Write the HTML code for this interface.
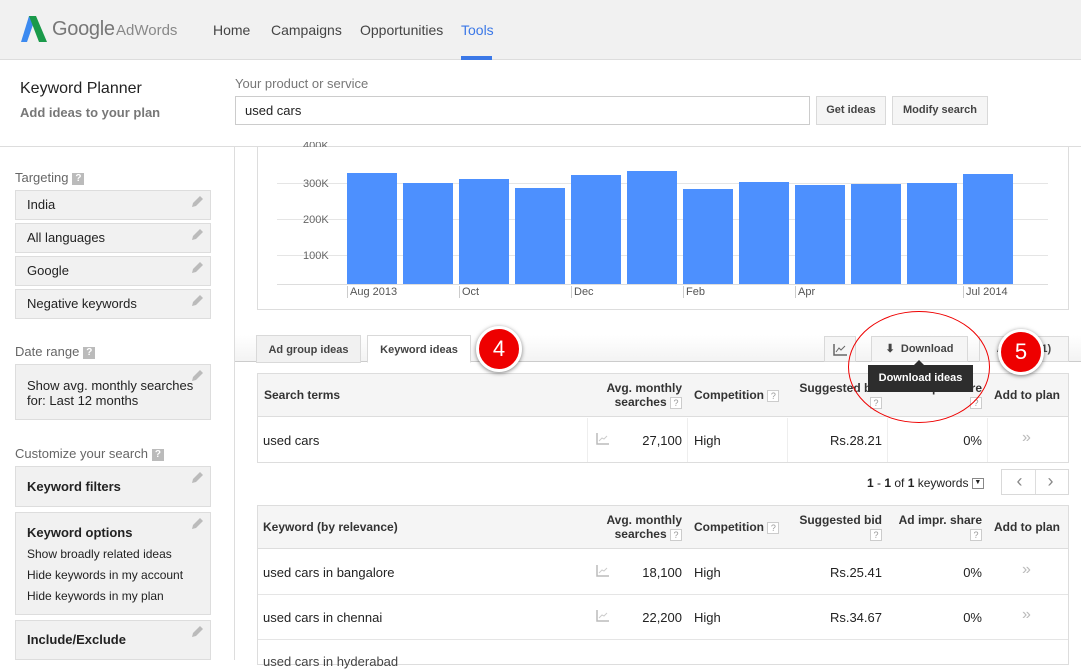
<!DOCTYPE html>
<html><head><meta charset="utf-8"><style>
*{box-sizing:border-box;margin:0;padding:0}
body{width:1081px;height:660px;overflow:hidden;font-family:"Liberation Sans",Arial,sans-serif;font-size:13px;color:#222;background:#fff;position:relative}
.a{position:absolute}
.box{position:absolute;left:15px;width:196px;background:#f1f1f1;border:1px solid #ddd;padding:0 11px;line-height:28px;font-size:13px}
.pen{position:absolute;right:7px;top:4px;width:12px;height:14px}
.q{display:inline-block;width:12px;height:12px;background:#bbb;color:#fff;font-size:10px;line-height:12px;text-align:center;font-weight:bold;vertical-align:middle;margin-left:4px}
.qq{display:inline-block;width:12px;height:12px;border:1px solid #ccc;color:#999;font-size:9px;line-height:10px;text-align:center;font-weight:normal;vertical-align:middle;background:#fff}
.bar{position:absolute;background:#4d90fe;width:50px;bottom:376px}
.btn{position:absolute;background:#f5f5f5;border:1px solid #d9d9d9;font-weight:bold;font-size:11px;color:#444;text-align:center}
.th{font-weight:bold;font-size:12px;color:#333}
.lbl{color:#666;font-size:13px}
</style></head><body>
<div class="a" style="left:0;top:0;width:1081px;height:60px;background:#f1f1f1;border-bottom:1px solid #ddd"></div>
<svg class="a" style="left:21px;top:16px" width="26" height="26" viewBox="0 0 26 26"><polygon points="8,0 15,0 6,26 0,26" fill="#3c8af0"/><polygon points="8,0 15,0 26,26 18,26" fill="#1a9a4a"/></svg>
<div class="a" style="left:52px;top:18px;font-size:20px;color:#777;letter-spacing:-0.3px">Google</div>
<div class="a" style="left:116px;top:22px;font-size:15px;color:#888">AdWords</div>
<div class="a" style="left:213px;top:22px;font-size:14px;color:#444">Home</div>
<div class="a" style="left:271px;top:22px;font-size:14px;color:#444">Campaigns</div>
<div class="a" style="left:360px;top:22px;font-size:14px;color:#444">Opportunities</div>
<div class="a" style="left:461px;top:22px;font-size:14px;color:#3b78e7">Tools</div>
<div class="a" style="left:461px;top:56px;width:31px;height:4px;background:#3b78e7"></div>
<div class="a" style="left:20px;top:80px;font-size:16px;color:#222">Keyword Planner</div>
<div class="a" style="left:20px;top:105px;font-size:13px;font-weight:bold;color:#777">Add ideas to your plan</div>
<div class="a" style="left:235px;top:76px;font-size:13px;color:#777">Your product or service</div>
<div class="a" style="left:235px;top:96px;width:575px;height:29px;border:1px solid #ccc;padding:6px 9px;font-size:13px">used cars</div>
<div class="btn" style="left:816px;top:96px;width:70px;height:29px;line-height:27px">Get ideas</div>
<div class="btn" style="left:892px;top:96px;width:96px;height:29px;line-height:27px">Modify search</div>
<div class="a" style="left:0;top:146px;width:1081px;height:1px;background:#ddd"></div>
<div class="a" style="left:234px;top:147px;width:1px;height:513px;background:#ddd"></div>
<div class="a lbl" style="left:15px;top:170px">Targeting<span class="q">?</span></div>
<div class="box" style="top:190px">India<svg class="pen" viewBox="0 0 12 14"><path d="M9 1l3 3-7 7-4 1 1-4z" fill="#bbb"/></svg></div>
<div class="box" style="top:223px">All languages<svg class="pen" viewBox="0 0 12 14"><path d="M9 1l3 3-7 7-4 1 1-4z" fill="#bbb"/></svg></div>
<div class="box" style="top:256px">Google<svg class="pen" viewBox="0 0 12 14"><path d="M9 1l3 3-7 7-4 1 1-4z" fill="#bbb"/></svg></div>
<div class="box" style="top:289px">Negative keywords<svg class="pen" viewBox="0 0 12 14"><path d="M9 1l3 3-7 7-4 1 1-4z" fill="#bbb"/></svg></div>
<div class="a lbl" style="left:15px;top:344px">Date range<span class="q">?</span></div>
<div class="box" style="top:364px;height:56px;line-height:15px;padding-top:13px">Show avg. monthly searches<br>for: Last 12 months<svg class="pen" viewBox="0 0 12 14"><path d="M9 1l3 3-7 7-4 1 1-4z" fill="#bbb"/></svg></div>
<div class="a lbl" style="left:15px;top:446px">Customize your search<span class="q">?</span></div>
<div class="box" style="top:466px;height:41px;line-height:39px;font-weight:bold">Keyword filters<svg class="pen" viewBox="0 0 12 14"><path d="M9 1l3 3-7 7-4 1 1-4z" fill="#bbb"/></svg></div>
<div class="box" style="top:512px;height:103px;line-height:21px;padding-top:9px;font-size:12px"><b style="font-size:13px">Keyword options</b><br>Show broadly related ideas<br>Hide keywords in my account<br>Hide keywords in my plan<svg class="pen" viewBox="0 0 12 14"><path d="M9 1l3 3-7 7-4 1 1-4z" fill="#bbb"/></svg></div>
<div class="box" style="top:620px;height:40px;line-height:38px;font-weight:bold">Include/Exclude<svg class="pen" viewBox="0 0 12 14"><path d="M9 1l3 3-7 7-4 1 1-4z" fill="#bbb"/></svg></div>
<div class="a" style="left:257px;top:147px;width:812px;height:163px;border:1px solid #ddd;border-top:none"></div>
<div class="a" style="left:277px;top:183px;width:771px;height:1px;background:#e5e5e5"></div>
<div class="a" style="left:277px;top:219px;width:771px;height:1px;background:#e5e5e5"></div>
<div class="a" style="left:277px;top:255px;width:771px;height:1px;background:#e5e5e5"></div>
<div class="a" style="left:277px;top:284px;width:771px;height:1px;background:#ddd"></div>
<div class="a" style="left:303px;top:142px;font-size:11px;color:#666;height:5px;overflow:hidden;line-height:8px">400K</div>
<div class="a" style="left:303px;top:178px;font-size:11px;color:#666">300K</div>
<div class="a" style="left:303px;top:214px;font-size:11px;color:#666">200K</div>
<div class="a" style="left:303px;top:250px;font-size:11px;color:#666">100K</div>
<div class="bar" style="left:347px;top:173px"></div><div class="bar" style="left:403px;top:183px"></div><div class="bar" style="left:459px;top:179px"></div><div class="bar" style="left:515px;top:188px"></div><div class="bar" style="left:571px;top:175px"></div><div class="bar" style="left:627px;top:171px"></div><div class="bar" style="left:683px;top:189px"></div><div class="bar" style="left:739px;top:182px"></div><div class="bar" style="left:795px;top:185px"></div><div class="bar" style="left:851px;top:184px"></div><div class="bar" style="left:907px;top:183px"></div><div class="bar" style="left:963px;top:174px"></div>
<div class="a" style="left:347px;top:286px;font-size:11px;color:#555;border-left:1px solid #ccc;padding-left:2px">Aug 2013</div>
<div class="a" style="left:459px;top:286px;font-size:11px;color:#555;border-left:1px solid #ccc;padding-left:2px">Oct</div>
<div class="a" style="left:571px;top:286px;font-size:11px;color:#555;border-left:1px solid #ccc;padding-left:2px">Dec</div>
<div class="a" style="left:683px;top:286px;font-size:11px;color:#555;border-left:1px solid #ccc;padding-left:2px">Feb</div>
<div class="a" style="left:795px;top:286px;font-size:11px;color:#555;border-left:1px solid #ccc;padding-left:2px">Apr</div>
<div class="a" style="left:963px;top:286px;font-size:11px;color:#555;border-left:1px solid #ccc;padding-left:2px">Jul 2014</div>
<div class="a" style="left:235px;top:335px;width:846px;height:27px;background:linear-gradient(#fff,#f3f3f3);border-bottom:1px solid #ccc"></div>
<div class="btn" style="left:256px;top:335px;width:105px;height:28px;line-height:28px;font-size:11px;background:#f1f1f1">Ad group ideas</div>
<div class="btn" style="left:367px;top:335px;width:104px;height:28px;line-height:28px;font-size:11px;background:#fff;border-bottom-color:#fff">Keyword ideas</div>
<div class="btn" style="left:824px;top:336px;width:32px;height:26px"><svg width="14" height="12" style="margin-top:7px" viewBox="0 0 14 12"><path d="M1 0v11h13" stroke="#666" fill="none" stroke-width="1.5"/><path d="M3 8l3-4 2 2 4-4" stroke="#666" fill="none"/></svg></div>
<div class="btn" style="left:871px;top:336px;width:97px;height:26px;line-height:24px">⬇&nbsp; Download</div>
<div class="btn" style="left:979px;top:336px;width:90px;height:26px;line-height:24px">A&nbsp;&nbsp;&nbsp;&nbsp;&nbsp;&nbsp;&nbsp;&nbsp;&nbsp;&nbsp;01)</div>
<div class="a" style="left:257px;top:373px;width:812px;height:90px;border:1px solid #ddd"></div>
<div class="a" style="left:258px;top:374px;width:810px;height:43px;background:#f5f5f5;border-bottom:1px solid #ddd"></div>
<div class="a th" style="left:264px;top:388px">Search terms</div>
<div class="a th" style="left:600px;top:381px;width:82px;text-align:right;line-height:14px">Avg. monthly<br>searches <span class="qq">?</span></div>
<div class="a th" style="left:694px;top:388px">Competition <span class="qq">?</span></div>
<div class="a th" style="left:794px;top:381px;width:88px;text-align:right;line-height:14px">Suggested bid<br><span class="qq">?</span></div>
<div class="a th" style="left:897px;top:381px;width:85px;text-align:right;line-height:14px">Ad impr. share<br><span class="qq">?</span></div>
<div class="a th" style="left:994px;top:388px">Add to plan</div>
<div class="a" style="left:263px;top:433px">used cars</div>
<div class="a" style="left:587px;top:418px;width:1px;height:44px;background:#eee"></div>
<div class="a" style="left:687px;top:418px;width:1px;height:44px;background:#eee"></div>
<div class="a" style="left:787px;top:418px;width:1px;height:44px;background:#eee"></div>
<div class="a" style="left:887px;top:418px;width:1px;height:44px;background:#eee"></div>
<div class="a" style="left:987px;top:418px;width:1px;height:44px;background:#eee"></div>
<svg class="a" style="left:596px;top:433px" width="13" height="12" viewBox="0 0 13 12"><path d="M1 0v11h12" stroke="#bbb" fill="none" stroke-width="1.5"/><path d="M3 8l3-3 2 1 3-3" stroke="#ccc" fill="none"/></svg>
<div class="a" style="left:600px;top:433px;width:82px;text-align:right">27,100</div>
<div class="a" style="left:694px;top:433px">High</div>
<div class="a" style="left:794px;top:433px;width:88px;text-align:right">Rs.28.21</div>
<div class="a" style="left:897px;top:433px;width:85px;text-align:right">0%</div>
<div class="a" style="left:1022px;top:429px;color:#bbb;font-size:16px">»</div>
<div class="a" style="left:867px;top:476px;font-size:12px"><b>1</b> - <b>1</b> of <b>1</b> keywords <span style="display:inline-block;width:12px;height:11px;border:1px solid #888;font-size:7px;text-align:center;vertical-align:middle">▼</span></div>
<div class="btn" style="left:1001px;top:469px;width:68px;height:26px;background:#fff;font-weight:normal;font-size:18px;color:#888;line-height:22px">‹&nbsp;&nbsp;&nbsp;&nbsp;&nbsp;›</div>
<div class="a" style="left:1035px;top:470px;width:1px;height:24px;background:#ddd"></div>
<div class="a" style="left:257px;top:505px;width:812px;height:160px;border:1px solid #ddd"></div>
<div class="a" style="left:258px;top:506px;width:810px;height:43px;background:#f5f5f5;border-bottom:1px solid #ddd"></div>
<div class="a th" style="left:263px;top:520px">Keyword (by relevance)</div>
<div class="a th" style="left:600px;top:513px;width:82px;text-align:right;line-height:14px">Avg. monthly<br>searches <span class="qq">?</span></div>
<div class="a th" style="left:694px;top:520px">Competition <span class="qq">?</span></div>
<div class="a th" style="left:794px;top:513px;width:88px;text-align:right;line-height:14px">Suggested bid<br><span class="qq">?</span></div>
<div class="a th" style="left:897px;top:513px;width:85px;text-align:right;line-height:14px">Ad impr. share<br><span class="qq">?</span></div>
<div class="a th" style="left:994px;top:520px">Add to plan</div>
<div class="a" style="left:258px;top:594px;width:810px;height:1px;background:#e5e5e5"></div>
<div class="a" style="left:258px;top:639px;width:810px;height:1px;background:#e5e5e5"></div>
<div class="a" style="left:263px;top:565px">used cars in bangalore</div>
<svg class="a" style="left:596px;top:565px" width="13" height="12" viewBox="0 0 13 12"><path d="M1 0v11h12" stroke="#bbb" fill="none" stroke-width="1.5"/><path d="M3 8l3-3 2 1 3-3" stroke="#ccc" fill="none"/></svg>
<div class="a" style="left:600px;top:565px;width:82px;text-align:right">18,100</div>
<div class="a" style="left:694px;top:565px">High</div>
<div class="a" style="left:794px;top:565px;width:88px;text-align:right">Rs.25.41</div>
<div class="a" style="left:897px;top:565px;width:85px;text-align:right">0%</div>
<div class="a" style="left:1022px;top:561px;color:#bbb;font-size:16px">»</div>
<div class="a" style="left:263px;top:610px">used cars in chennai</div>
<svg class="a" style="left:596px;top:610px" width="13" height="12" viewBox="0 0 13 12"><path d="M1 0v11h12" stroke="#bbb" fill="none" stroke-width="1.5"/><path d="M3 8l3-3 2 1 3-3" stroke="#ccc" fill="none"/></svg>
<div class="a" style="left:600px;top:610px;width:82px;text-align:right">22,200</div>
<div class="a" style="left:694px;top:610px">High</div>
<div class="a" style="left:794px;top:610px;width:88px;text-align:right">Rs.34.67</div>
<div class="a" style="left:897px;top:610px;width:85px;text-align:right">0%</div>
<div class="a" style="left:1022px;top:606px;color:#bbb;font-size:16px">»</div>
<div class="a" style="left:263px;top:654px;color:#444">used cars in hyderabad</div>
<div class="a" style="left:868px;top:365px;width:105px;height:27px;background:#2d2d2d;color:#fff;font-size:11px;font-weight:bold;text-align:center;line-height:27px">Download ideas</div>
<div class="a" style="left:914px;top:360px;width:0;height:0;border:5px solid transparent;border-bottom-color:#2d2d2d;border-top:0"></div>
<div class="a" style="left:848px;top:311px;width:142px;height:112px;border:1.5px solid #e00;border-radius:50%"></div>
<div class="a" style="left:476px;top:326px;width:46px;height:46px;border-radius:50%;background:#e00;border:3px solid #fff;box-shadow:0 1px 4px rgba(0,0,0,.5);color:#fff;font-size:22px;text-align:center;line-height:40px">4</div>
<div class="a" style="left:998px;top:329px;width:46px;height:46px;border-radius:50%;background:#e00;border:3px solid #fff;box-shadow:0 1px 4px rgba(0,0,0,.5);color:#fff;font-size:22px;text-align:center;line-height:40px">5</div>
</body></html>
